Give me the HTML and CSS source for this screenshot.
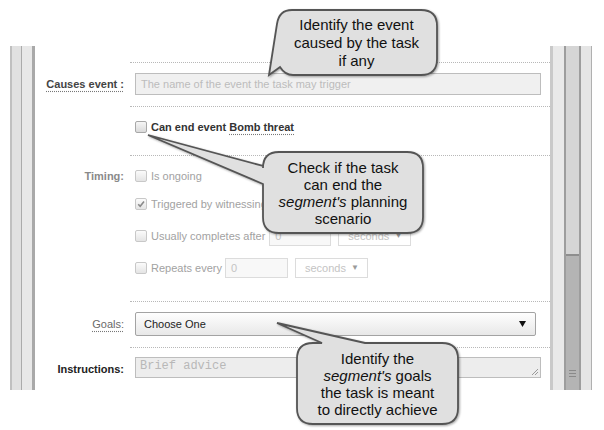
FILE: index.html
```html
<!DOCTYPE html>
<html>
<head>
<meta charset="utf-8">
<link rel="stylesheet" href="styles.css">
</head>
<body>
<div class="page">
  <div class="frame">
    <div class="bar-left"></div>
    <div class="content">
      <div class="spacer"></div>

      <div class="row">
        <div class="label"><span class="dotted strong">Causes event :</span></div>
        <div class="field field-causes"><div class="input">The name of the event the task may trigger</div></div>
      </div>

      <div class="row">
        <div class="label"></div>
        <div class="field field-end">
          <div class="opt opt-strong"><span class="cb cb-dark"></span><span>Can end event <span class="dotted">Bomb threat</span></span></div>
        </div>
      </div>

      <div class="row">
        <div class="label label-top"><span class="muted-label">Timing:</span></div>
        <div class="field field-timing">
          <div class="opt"><span class="cb"></span><span>Is ongoing</span></div>
          <div class="opt opt-2"><span class="cb"><svg width="10" height="10" viewBox="0 0 10 10"><path d="M2.2 5.2 L4.2 7.3 L8 2.6" fill="none" stroke="#8a8a8a" stroke-width="1.6"/></svg></span><span class="clip">Triggered by witnessing event</span></div>
          <div class="opt opt-3"><span class="cb"></span><span>Usually completes after</span><span class="sm">0</span><span class="sel-sm"><span>seconds</span><span class="arr">&#9660;</span></span></div>
          <div class="opt opt-4"><span class="cb"></span><span>Repeats every</span><span class="sm sm-rep">0</span><span class="sel-sm"><span>seconds</span><span class="arr">&#9660;</span></span></div>
        </div>
      </div>

      <div class="row">
        <div class="label"><span class="dotted goals">Goals:</span></div>
        <div class="field field-goals">
          <div class="select"><span>Choose One</span><svg width="7" height="6" viewBox="0 0 7 6"><path d="M0 0 H7 L3.5 6 Z" fill="#111"/></svg></div>
        </div>
      </div>

      <div class="row">
        <div class="label"><span class="strong dark">Instructions:</span></div>
        <div class="field field-instr">
          <div class="textarea"><span>Brief advice</span><svg class="grip-corner" width="8" height="8" viewBox="0 0 8 8"><path d="M1 7 L7 1 M4 7 L7 4" stroke="#9a9a9a" stroke-width="1"/></svg></div>
        </div>
      </div>
    </div>
    <div class="bar-right">
      <div class="e1"></div>
      <div class="e2"></div>
      <div class="e3"></div>
      <div class="track"><div class="thumb"><span class="grip"></span></div></div>
      <div class="e3"></div>
      <div class="e5"></div>
      <div class="e6"></div>
    </div>
  </div>

  <svg class="callouts" width="604" height="430" viewBox="0 0 604 430">
    <path class="bubble" d="M292 10 H421 Q437 10 437 26 V59 Q437 75 421 75 H293 Q285 75 280 67 L269 75 L277 24 Q279 10 292 10 Z"/>
    <path class="bubble" d="M279 152 H407 Q423 152 423 168 V217 Q423 233 407 233 H279 Q263 233 263 217 V184 L148 135 L263 166 V168 Q263 152 279 152 Z"/>
    <path class="bubble" d="M313 343 H322 L277 323 L365 343 H442 Q458 343 458 359 V408 Q458 424 442 424 H313 Q297 424 297 408 V359 Q297 343 313 343 Z"/>
  </svg>
  <div class="tip tip-1"><p class="tip-text">Identify the event<br>caused by the task<br>if any</p></div>
  <div class="tip tip-2"><p class="tip-text">Check if the task<br>can end the<br><i>segment's</i> planning<br>scenario</p></div>
  <div class="tip tip-3"><p class="tip-text">Identify the<br><i>segment's</i> goals<br>the task is meant<br>to directly achieve</p></div>
</div>
</body>
</html>
```

FILE: styles.css
```css
* { box-sizing: border-box; }
body { margin: 0; background: #fff; font-family: "Liberation Sans", Arial, sans-serif; }
.page { position: relative; width: 604px; height: 430px; overflow: hidden; background: #fff; }
.frame { display: flex; margin-top: 46px; height: 344px; }
.bar-left {
  width: 25px; margin-left: 10px;
  background: linear-gradient(to right, #c0c0c0 0 2px, #e1e1e1 2px 11px, #ababab 11px 12px, #e8e8e8 12px 22px, #a9a9a9 22px 25px);
}
.content { width: 515px; background: #fff; }
.spacer { height: 16px; }
.row { display: grid; grid-template-columns: 95px 1fr; align-items: center; }
.label { text-align: right; padding-right: 6px; font-size: 11px; line-height: 16px; color: #444; }
.label-top { align-self: start; padding-top: 13px; }
.strong { font-weight: bold; }
.dark { color: #222; }
.muted-label { font-weight: bold; color: #8a8a8a; }
.goals { color: #6a6a6a; }
.dotted { text-decoration-line: underline; text-decoration-style: dotted; text-decoration-color: #777; text-underline-offset: 3px; }
.field { border-top: 1px dotted #b8b8b8; padding: 10px 9px 11px 5px; font-size: 11px; line-height: 16px; }
.field-end { padding: 12px 9px 20px 5px; }
.field-timing { padding: 12px 9px 23px 5px; }
.field-goals { padding: 10px 9px 11px 5px; }
.field-instr { padding: 9px 9px 12px 5px; }

.input {
  width: 406px; height: 22px; border: 1px solid #bdbdbd; background: #f0f0f0;
  color: #bcbcbc; padding: 0 5px; line-height: 20px; font-size: 11px; white-space: nowrap;
}
.opt { display: flex; align-items: center; height: 16px; color: #a2a2a2; white-space: nowrap; }
.opt-strong { color: #333; font-weight: bold; }
.opt-2 { margin-top: 12px; }
.opt-3 { margin-top: 14px; height: 20px; }
.opt-4 { margin-top: 12px; height: 20px; }
.clip { display: block; width: 112px; overflow: hidden; white-space: nowrap; }
.cb {
  width: 12px; height: 12px; flex: none; margin-right: 4px;
  border: 1px solid #c8c8c8; border-radius: 2px;
  background: linear-gradient(#fbfbfb, #e4e4e4);
  display: flex; align-items: center; justify-content: center;
}
.cb-dark { border-color: #a8a8a8; background: linear-gradient(#f6f6f6, #dadada); }
.sm {
  width: 62px; height: 20px; margin-left: 4px; border: 1px solid #dcdcdc; background: #f8f8f8;
  color: #c4c4c4; padding-left: 5px; line-height: 18px;
}
.sm-rep { width: 63px; margin-left: 3px; }
.sel-sm {
  width: 73px; height: 20px; margin-left: 7px; border: 1px solid #dcdcdc; background: #fff;
  color: #c4c4c4; display: flex; align-items: center; justify-content: space-between; padding: 0 8px 0 9px;
}
.arr { font-size: 8px; color: #9a9a9a; }

.select {
  width: 401px; height: 24px; border: 1px solid #a3a3a3; border-radius: 2px;
  background: linear-gradient(#fefefe, #e8e8e8);
  display: flex; align-items: center; justify-content: space-between;
  padding: 0 9px 0 8px; color: #222; font-size: 11px;
}
.textarea {
  width: 406px; height: 21px; border: 1px solid #bdbdbd; background: #ededed;
  font-family: "Liberation Mono", "Courier New", monospace; font-size: 12px; color: #b8b8b8;
  padding: 0 1px 1px 4px; line-height: 19px;
  display: flex; justify-content: space-between; align-items: flex-end;
}

.bar-right { width: 42px; display: flex; }
.e1 { width: 3px; background: #c9c9c9; }
.e2 { width: 11px; background: #e9e9e9; }
.e3 { width: 2px; background: #9d9d9d; }
.track { width: 13px; background: #d5d5d5; display: flex; flex-direction: column; justify-content: flex-end; }
.thumb {
  height: 136px; background: #b4b4b4; border-top: 2px solid #8e8e8e;
  display: flex; flex-direction: column; align-items: center; justify-content: flex-end; padding-bottom: 13px;
}
.grip { width: 7px; height: 7px; background: repeating-linear-gradient(#8a8a8a 0 1px, transparent 1px 3px); }
.e5 { width: 10px; background: #e5e5e5; }
.e6 { width: 1px; background: #b0b0b0; }

.callouts { position: absolute; left: 0; top: 0; }
.bubble { fill: #e0e0e0; stroke: #555; stroke-width: 1.8; filter: drop-shadow(1px 1px 1px rgba(0,0,0,0.35)); }
.tip {
  position: absolute; display: flex; align-items: center; justify-content: center;
  color: #111;
}
.tip-text { margin: 0; text-align: center; font-size: 15px; line-height: 17px; white-space: nowrap; }
.tip-1 { left: 276px; top: 10px; width: 161px; height: 65px; }
.tip-1 .tip-text { line-height: 18px; }
.tip-2 { left: 263px; top: 152px; width: 160px; height: 81px; }
.tip-3 { left: 297px; top: 343px; width: 161px; height: 81px; }
```
